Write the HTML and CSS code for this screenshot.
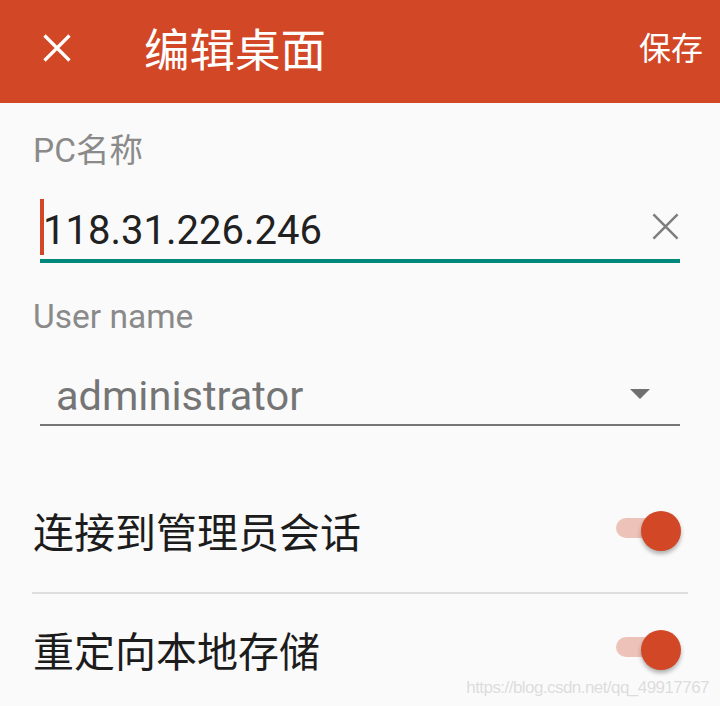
FILE: index.html
```html
<!DOCTYPE html>
<html lang="zh-CN">
<head>
    <meta charset="UTF-8">
    <meta name="viewport" content="width=device-width, initial-scale=1.0">
    <title>编辑桌面</title>
    <link rel="stylesheet" href="styles.css">
</head>
<body>
    <div class="app-bar">
        <svg class="close-icon" viewBox="0 0 28 28">
            <path d="M1.5 1.5 L26.5 26.5 M26.5 1.5 L1.5 26.5" stroke="#fff" stroke-width="3.2" fill="none"/>
        </svg>
        <div class="app-title">编辑桌面</div>
        <div class="save-btn">保存</div>
    </div>

    <div class="form">
        <div class="field-label">PC名称</div>
        <div class="text-input">
            <span class="cursor"></span>
            <span class="input-value">118.31.226.246</span>
            <svg class="clear-icon" viewBox="0 0 28 28">
                <path d="M1.5 1.5 L26.5 26.5 M26.5 1.5 L1.5 26.5" stroke="#7d7d7d" stroke-width="2.6" fill="none"/>
            </svg>
        </div>

        <div class="field-label user-label">User name</div>
        <div class="spinner">
            <span class="spinner-value">administrator</span>
            <svg class="spinner-arrow" viewBox="0 0 20 10">
                <path d="M0 0 H20 L10 10 Z" fill="#707070"/>
            </svg>
        </div>
    </div>

    <div class="switch-list">
        <div class="switch-row">
            <span class="switch-text">连接到管理员会话</span>
            <span class="switch"><span class="switch-thumb"></span></span>
        </div>
        <div class="divider"></div>
        <div class="switch-row">
            <span class="switch-text">重定向本地存储</span>
            <span class="switch"><span class="switch-thumb"></span></span>
        </div>
    </div>

    <div class="watermark">https://blog.csdn.net/qq_49917767</div>
</body>
</html>
```

FILE: styles.css
```css
body {
    margin: 0;
    height: 706px;
    overflow: hidden;
    position: relative;
    background: #fafafa;
    font-family: Roboto, "Noto Sans CJK SC", sans-serif;
    color: #212121;
}

/* 顶部标题栏 */
.app-bar {
    height: 103px;
    background: #d24726;
    color: #fff;
    display: flex;
    align-items: center;
    padding: 0 17px 0 43px;
    box-sizing: border-box;
}

.close-icon {
    width: 28px;
    height: 28px;
    flex: none;
    margin-bottom: 7px;
}

.app-title {
    font-size: 45.5px;
    line-height: 1;
    margin-left: 73px;
    margin-top: 1px;
}

.save-btn {
    margin-left: auto;
    font-size: 32px;
    line-height: 1;
    margin-bottom: 6px;
}

/* 表单 */
.form {
    padding: 28px 40px 0 33px;
}

.field-label {
    height: 40px;
    line-height: 40px;
    font-size: 33.5px;
    color: #8a8a8a;
}

.user-label {
    margin-top: 34px;
}

.text-input {
    margin: 28px 0 0 7px;
    height: 60px;
    border-bottom: 4px solid #00897b;
    display: flex;
    align-items: flex-start;
}

.cursor {
    width: 4px;
    height: 56px;
    background: #d24726;
    flex: none;
}

.input-value {
    font-size: 40px;
    line-height: 56px;
    padding-top: 4px;
    color: #212121;
    margin-left: -1px;
}

.clear-icon {
    width: 27px;
    height: 27px;
    margin: 14px 1px 0 auto;
    flex: none;
}

.spinner {
    margin: 31px 0 0 7px;
    height: 56px;
    border-bottom: 2px solid #767676;
    display: flex;
    align-items: center;
    padding: 0 30px 0 16px;
}

.spinner-value {
    font-size: 41.5px;
    line-height: 56px;
    color: #757575;
}

.spinner-arrow {
    width: 20px;
    height: 10px;
    margin: 0 0 4px auto;
    flex: none;
}

/* 开关列表 */
.switch-list {
    margin-top: 49px;
}

.switch-row {
    height: 112px;
    display: flex;
    align-items: center;
    padding: 0 39px 0 33px;
}

.switch-text {
    font-size: 41px;
    line-height: 1;
    color: #1c1c1c;
    margin-top: 7px;
}

.switch {
    margin-left: auto;
    width: 65px;
    height: 40px;
    position: relative;
    flex: none;
}

.switch::before {
    content: "";
    position: absolute;
    left: 0;
    top: 7px;
    width: 60px;
    height: 20px;
    border-radius: 10px;
    background: rgba(210, 71, 38, 0.3);
}

.switch-thumb {
    position: absolute;
    right: 0;
    top: 0;
    width: 40px;
    height: 40px;
    border-radius: 50%;
    background: #d24726;
    box-shadow: 0 3px 4px rgba(0, 0, 0, 0.3);
}

.divider {
    height: 2px;
    background: #dedede;
    margin: 5px 32px 0 32px;
}

.watermark {
    position: absolute;
    right: 11px;
    bottom: 8px;
    font-family: "Liberation Sans", sans-serif;
    font-size: 17px;
    letter-spacing: -0.55px;
    color: #dcdcdc;
    text-shadow: 0 0 1px #fff;
}
```
